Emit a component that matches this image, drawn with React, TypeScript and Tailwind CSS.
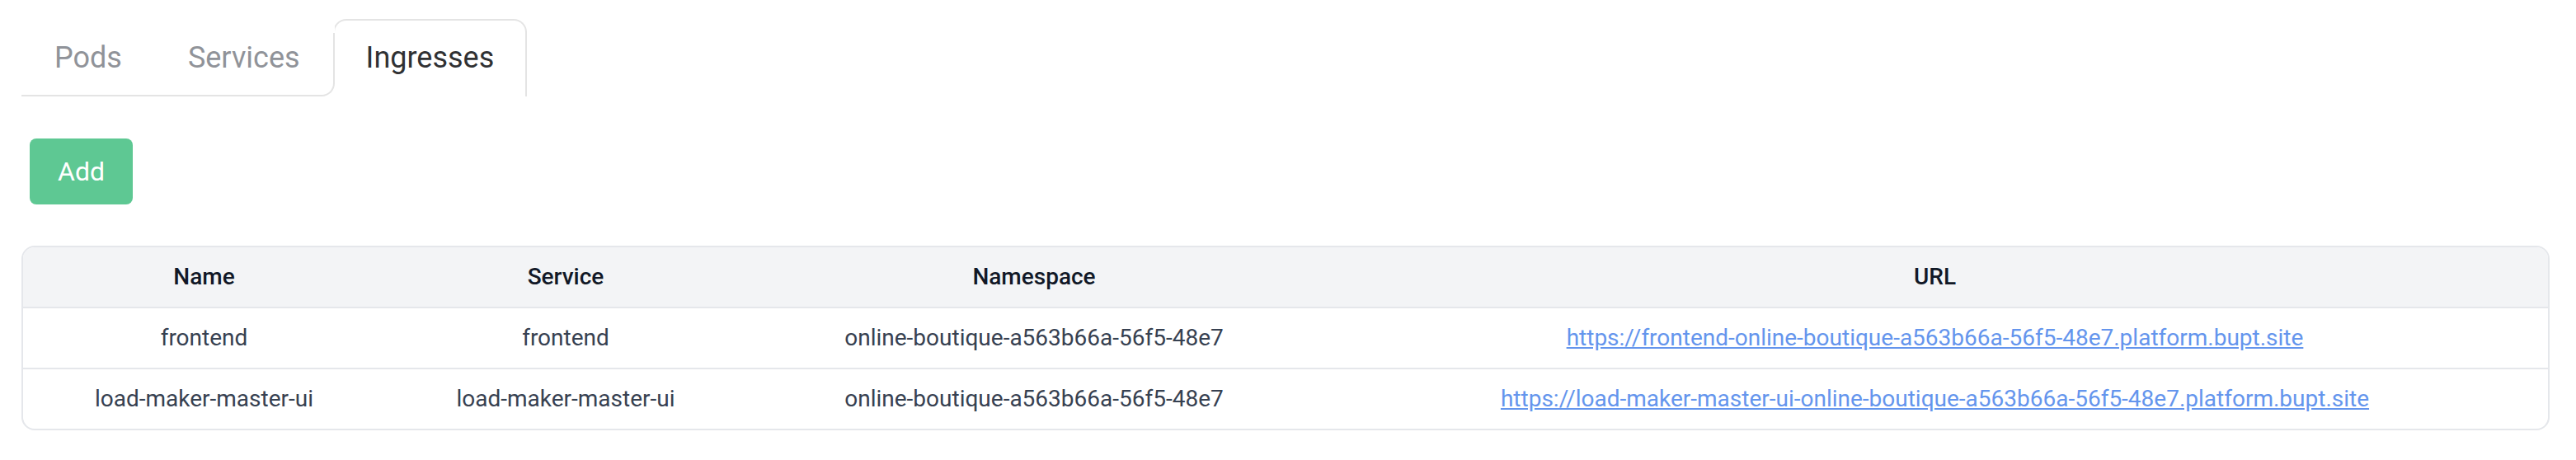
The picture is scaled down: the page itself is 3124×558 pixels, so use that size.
import { useState } from 'react';

type Ingress = {
  name: string;
  service: string;
  namespace: string;
  url: string;
};

const ingresses: Ingress[] = [
  {
    name: 'frontend',
    service: 'frontend',
    namespace: 'online-boutique-a563b66a-56f5-48e7',
    url: 'https://frontend-online-boutique-a563b66a-56f5-48e7.platform.bupt.site',
  },
  {
    name: 'load-maker-master-ui',
    service: 'load-maker-master-ui',
    namespace: 'online-boutique-a563b66a-56f5-48e7',
    url: 'https://load-maker-master-ui-online-boutique-a563b66a-56f5-48e7.platform.bupt.site',
  },
];

const tabs = ['Pods', 'Services', 'Ingresses'];

export default function App() {
  const [active] = useState('Ingresses');
  const inactive = tabs.filter((t) => t !== active);

  return (
    <div className="min-h-screen bg-white pt-[23px] pl-[26px] pr-[32px] font-['Roboto',sans-serif]">
      {/* Tabs */}
      <div className="flex">
        <div className="relative z-10 -mr-[2px] bg-white pt-[17px]">
          <div className="flex rounded-br-2xl border-b-2 border-r-2 border-[#e4e4e4]">
            {inactive.map((tab) => (
              <button
                key={tab}
                className="px-10 pt-[12px] pb-[27px] text-[36px] leading-[36px] text-[#909399]"
              >
                {tab}
              </button>
            ))}
          </div>
        </div>
        <div className="rounded-t-2xl border-2 border-b-0 border-[#e4e4e4] bg-white px-[38px] pt-[27px] pb-[29px] text-[36px] leading-[36px] text-[#303133]">
          {active}
        </div>
      </div>

      {/* Add button */}
      <button className="mt-[51px] ml-[10px] flex h-[80px] w-[125px] items-center justify-center rounded-lg bg-[#5ec893] text-[32px] text-white">
        Add
      </button>

      {/* Ingress table */}
      <div className="mt-[50px] overflow-hidden rounded-2xl border-2 border-[#e5e7eb]">
        <table className="w-full table-fixed border-separate border-spacing-0 text-center text-[28px] leading-[32px]">
          <thead>
            <tr className="bg-[#f3f4f6] text-[#111827]">
              <th className="w-[439px] border-b-2 border-[#e5e7eb] py-[20px] font-medium">Name</th>
              <th className="w-[438px] border-b-2 border-[#e5e7eb] py-[20px] font-medium">Service</th>
              <th className="w-[698px] border-b-2 border-[#e5e7eb] py-[20px] font-medium">Namespace</th>
              <th className="border-b-2 border-[#e5e7eb] py-[20px] font-medium">URL</th>
            </tr>
          </thead>
          <tbody className="text-[#374151]">
            {ingresses.map((row, i) => {
              const cell =
                i < ingresses.length - 1 ? 'border-b-2 border-[#e5e7eb] py-[20px]' : 'py-[20px]';
              return (
                <tr key={row.name}>
                  <td className={cell}>{row.name}</td>
                  <td className={cell}>{row.service}</td>
                  <td className={cell}>{row.namespace}</td>
                  <td className={cell}>
                    <a href={row.url} className="text-[#6495ed] underline">
                      {row.url}
                    </a>
                  </td>
                </tr>
              );
            })}
          </tbody>
        </table>
      </div>
    </div>
  );
}
